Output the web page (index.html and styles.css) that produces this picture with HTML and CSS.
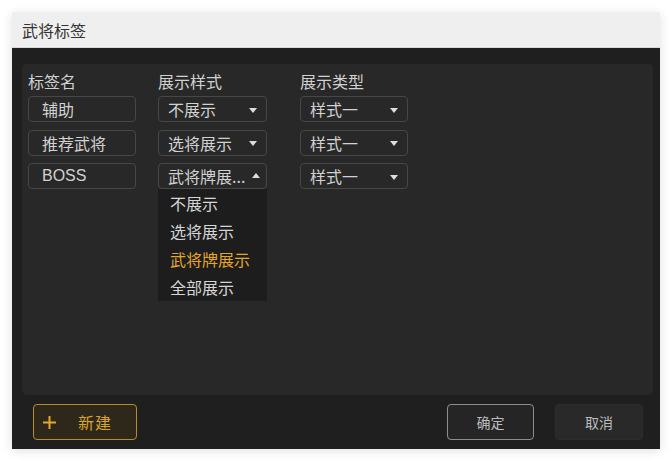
FILE: index.html
```html
<!DOCTYPE html>
<html lang="zh">
<head>
<meta charset="utf-8">
<link rel="stylesheet" href="styles.css">
</head>
<body>
<div class="dialog">
  <div class="title-bar">武将标签</div>
  <div class="dialog-body">
    <div class="panel">
      <div class="grid">
        <div class="head">标签名</div>
        <div class="head">展示样式</div>
        <div class="head">展示类型</div>

        <div class="field name">辅助</div>
        <div class="field select"><span class="val">不展示</span><span class="arrow down"></span></div>
        <div class="field select"><span class="val">样式一</span><span class="arrow down"></span></div>

        <div class="field name">推荐武将</div>
        <div class="field select"><span class="val">选将展示</span><span class="arrow down"></span></div>
        <div class="field select"><span class="val">样式一</span><span class="arrow down"></span></div>

        <div class="field name boss">BOSS</div>
        <div class="field select open"><span class="val">武将牌展...</span><span class="arrow up"></span>
          <ul class="menu">
            <li>不展示</li>
            <li>选将展示</li>
            <li class="active">武将牌展示</li>
            <li>全部展示</li>
          </ul>
        </div>
        <div class="field select"><span class="val">样式一</span><span class="arrow down"></span></div>
      </div>
    </div>
    <div class="footer">
      <button class="btn btn-new"><svg class="plus" width="13" height="13" viewBox="0 0 13 13"><path d="M6.5 0v13M0 6.5h13" stroke="#e0a82e" stroke-width="2"/></svg><span>新建</span></button>
      <div class="spacer"></div>
      <button class="btn btn-ok">确定</button>
      <button class="btn btn-cancel">取消</button>
    </div>
  </div>
</div>
</body>
</html>
```
FILE: styles.css
```css
* { box-sizing: border-box; }
html, body { margin: 0; padding: 0; background: #ffffff; }
body {
  font-family: "Noto Sans CJK SC", "Noto Sans", sans-serif;
  width: 672px;
  height: 461px;
  padding: 12px 12px 0 12px;
}
.dialog {
  width: 648px;
  height: 437px;
  display: flex;
  flex-direction: column;
  box-shadow: 0 2px 10px rgba(0,0,0,0.12);
}
.title-bar {
  height: 36px;
  background: #efefef;
  color: #333333;
  font-size: 16px;
  line-height: 36px;
  padding-left: 10px;
  border-bottom: 1px solid #d8d8d8;
}
.dialog-body {
  flex: 1;
  background: #1f1f1f;
  padding: 16px 7px 8px 10px;
  display: flex;
  flex-direction: column;
}
.panel {
  height: 331px;
  background: #282828;
  border-radius: 5px;
  padding: 7px 0 0 6px;
}
.grid {
  display: grid;
  grid-template-columns: 130px 142px 108px;
  grid-template-rows: 17.5px;
  grid-auto-rows: 26px;
  row-gap: 7.5px;
}
.head {
  color: #d2d2d2;
  font-size: 16px;
  line-height: 20px;
  height: 20px;
  align-self: start;
  margin-top: 0;
}
.field {
  height: 26px;
  border: 1px solid #474747;
  border-radius: 4px;
  color: #d2d2d2;
  font-size: 16px;
  line-height: 24px;
  white-space: nowrap;
}
.name { width: 108px; padding-left: 13px; }
.boss { font-family: "Liberation Sans", "Noto Sans", sans-serif; font-size: 16px; }
.select {
  width: 109px;
  padding: 0 9px;
  display: flex;
  align-items: center;
  justify-content: space-between;
  position: relative;
}
.grid > .select:nth-child(3n) { width: 108px; }
.val { line-height: 24px; }
.arrow {
  width: 0;
  height: 0;
  border-left: 4px solid transparent;
  border-right: 4px solid transparent;
}
.arrow.down { border-top: 5px solid #dddddd; margin-top: 2px; }
.arrow.up { border-bottom: 5px solid #dddddd; margin-top: -2px; margin-right: -3px; }
.menu {
  position: absolute;
  left: -1px;
  top: 25px;
  width: 109px;
  margin: 0;
  padding: 0;
  list-style: none;
  background: #1d1d1d;
  z-index: 2;
}
.menu li {
  height: 28px;
  line-height: 28px;
  padding-left: 12px;
  color: #d6d6d6;
  font-size: 16px;
}
.menu li.active { color: #e4a72a; }
.footer {
  margin-top: 9px;
  height: 36px;
  display: flex;
  padding-left: 11px;
  padding-right: 10px;
}
.spacer { flex: 1; }
.btn {
  font-family: "Noto Sans CJK SC", "Noto Sans", sans-serif;
  height: 36px;
  border-radius: 4px;
  cursor: pointer;
  padding: 0;
}
.btn-new {
  width: 104px;
  background: #2d2819;
  border: 1px solid #b58d2b;
  color: #d9a42c;
  font-size: 16px;
  display: flex;
  align-items: center;
  padding-left: 9px;
}
.btn-new span { margin-left: 22px; letter-spacing: 1px; }
.btn-ok {
  width: 87px;
  background: #252525;
  border: 1px solid #8d8d8d;
  color: #bdbdbd;
  font-size: 14px;
}
.btn-cancel {
  width: 88px;
  margin-left: 21px;
  background: #292929;
  border: 1px solid #2d2d2d;
  color: #bdbdbd;
  font-size: 14px;
}
```
